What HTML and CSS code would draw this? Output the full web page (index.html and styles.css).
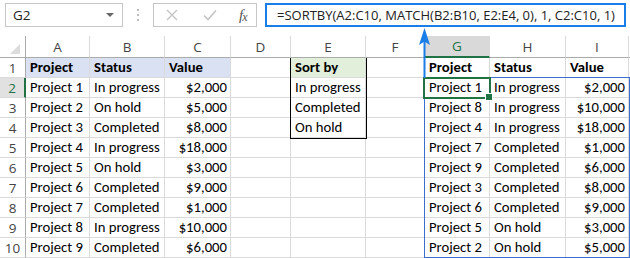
FILE: index.html
```html
<!DOCTYPE html>
<html>
<head>
<meta charset="utf-8">
<link rel="stylesheet" href="styles.css">
</head>
<body>
<div class="app">
  <div class="fbar">
    <div class="namebox"><span>G2</span><span class="caret"></span></div>
    <div class="dots"><i></i><i></i><i></i></div>
    <div class="btns">
      <svg class="ico" width="12" height="12" viewBox="0 0 12 12"><path d="M1 1L11 11M11 1L1 11" stroke="#c4c4c4" stroke-width="1.4" fill="none"/></svg>
      <svg class="ico" width="14" height="12" viewBox="0 0 14 12"><path d="M1 6.5L5 10.5L13 1.5" stroke="#c4c4c4" stroke-width="1.6" fill="none"/></svg>
      <span class="fx">f<span class="fxx">x</span></span>
    </div>
    <div class="formula">=SORTBY(A2:C10, MATCH(B2:B10, E2:E4, 0), 1, C2:C10, 1)</div>
  </div>
  <div class="sheet">
    <div class="corner"><span class="tri"></span></div>
    <div class="ch">A</div><div class="ch">B</div><div class="ch">C</div><div class="ch">D</div><div class="ch">E</div><div class="ch">F</div><div class="ch sel">G</div><div class="ch">H</div><div class="ch">I</div><div class="ch"></div>

    <div class="rh">1</div>
    <div class="c b hdr">Project</div><div class="c b hdr">Status</div><div class="c b hdr">Value</div><div class="c"></div><div class="c b grn">Sort by</div><div class="c"></div><div class="c b">Project</div><div class="c b">Status</div><div class="c b">Value</div><div class="c"></div>

    <div class="rh rsel">2</div>
    <div class="c">Project 1</div><div class="c">In progress</div><div class="c r">$2,000</div><div class="c"></div><div class="c">In progress</div><div class="c"></div><div class="c">Project 1</div><div class="c">In progress</div><div class="c r">$2,000</div><div class="c"></div>

    <div class="rh">3</div>
    <div class="c">Project 2</div><div class="c">On hold</div><div class="c r">$5,000</div><div class="c"></div><div class="c">Completed</div><div class="c"></div><div class="c">Project 8</div><div class="c">In progress</div><div class="c r">$10,000</div><div class="c"></div>

    <div class="rh">4</div>
    <div class="c">Project 3</div><div class="c">Completed</div><div class="c r">$8,000</div><div class="c"></div><div class="c">On hold</div><div class="c"></div><div class="c">Project 4</div><div class="c">In progress</div><div class="c r">$18,000</div><div class="c"></div>

    <div class="rh">5</div>
    <div class="c">Project 4</div><div class="c">In progress</div><div class="c r">$18,000</div><div class="c"></div><div class="c"></div><div class="c"></div><div class="c">Project 7</div><div class="c">Completed</div><div class="c r">$1,000</div><div class="c"></div>

    <div class="rh">6</div>
    <div class="c">Project 5</div><div class="c">On hold</div><div class="c r">$3,000</div><div class="c"></div><div class="c"></div><div class="c"></div><div class="c">Project 9</div><div class="c">Completed</div><div class="c r">$6,000</div><div class="c"></div>

    <div class="rh">7</div>
    <div class="c">Project 6</div><div class="c">Completed</div><div class="c r">$9,000</div><div class="c"></div><div class="c"></div><div class="c"></div><div class="c">Project 3</div><div class="c">Completed</div><div class="c r">$8,000</div><div class="c"></div>

    <div class="rh">8</div>
    <div class="c">Project 7</div><div class="c">Completed</div><div class="c r">$1,000</div><div class="c"></div><div class="c"></div><div class="c"></div><div class="c">Project 6</div><div class="c">Completed</div><div class="c r">$9,000</div><div class="c"></div>

    <div class="rh">9</div>
    <div class="c">Project 8</div><div class="c">In progress</div><div class="c r">$10,000</div><div class="c"></div><div class="c"></div><div class="c"></div><div class="c">Project 5</div><div class="c">On hold</div><div class="c r">$3,000</div><div class="c"></div>

    <div class="rh">10</div>
    <div class="c">Project 9</div><div class="c">Completed</div><div class="c r">$6,000</div><div class="c"></div><div class="c"></div><div class="c"></div><div class="c">Project 2</div><div class="c">On hold</div><div class="c r">$5,000</div><div class="c"></div>

    <div class="ov ebox"></div>
    <div class="ov spill"></div>
    <div class="ov cursor"><span class="handle"></span></div>
  </div>
  <div class="arrow">
    <svg width="13" height="50" viewBox="0 0 13 50"><path d="M6.5 0L12 17L6.5 13.5L1 17Z" fill="#1a7ee8"/><rect x="5.5" y="12" width="2" height="38" fill="#1a7ee8"/></svg>
  </div>
</div>
</body>
</html>
```

FILE: styles.css
```css
html, body { margin: 0; padding: 0; background: #fff; }
body { width: 630px; height: 258px; overflow: hidden; }
.app { position: relative; width: 630px; height: 258px; overflow: hidden; font-family: "Carlito", "Lato", "Liberation Sans", sans-serif; }

.fbar { height: 36px; display: flex; align-items: flex-start; padding-top: 3px; box-sizing: border-box; padding-left: 5px; }
.namebox { width: 118px; height: 24px; box-sizing: border-box; border: 1px solid #c6c6c6; display: flex; align-items: center; justify-content: space-between; padding: 0 8px 0 7px; font-family: "Open Sans", sans-serif; font-size: 13.5px; color: #222; }
.caret { width: 0; height: 0; border-left: 4px solid transparent; border-right: 4px solid transparent; border-top: 4px solid #666; }
.dots { width: 30px; height: 24px; display: flex; flex-direction: column; align-items: center; justify-content: center; gap: 3px; }
.dots i { width: 2px; height: 2px; background: #bdbdbd; display: block; }
.btns { width: 104px; height: 24px; box-sizing: border-box; border: 1px solid #c6c6c6; display: flex; align-items: center; padding-left: 12px; }
.btns .ico:first-child { margin-right: 25px; }
.btns .ico:nth-child(2) { margin-right: 22px; }
.fx { font-family: "Liberation Serif", serif; font-style: italic; font-size: 15px; color: #555; letter-spacing: -1px; }
.fxx { font-size: 12px; position: relative; top: 1px; }
.formula { margin-left: 8px; width: 361px; height: 24px; box-sizing: border-box; border: 2px solid #1a7ee8; display: flex; align-items: center; padding-left: 10px; font-family: "Open Sans", sans-serif; font-size: 13px; color: #222; white-space: nowrap; }

.sheet { position: relative; display: grid; grid-template-columns: 26px 64px 75px 66px 60px 75px 59px 65px 76px 63px 40px; grid-template-rows: 22px repeat(10, 20px); }
.corner, .ch, .rh, .c { box-sizing: border-box; border-right: 1px solid #dadada; border-bottom: 1px solid #dadada; }
.corner { border-bottom-color: #ababab; border-right-color: #ababab; position: relative; }
.tri { position: absolute; right: 5px; bottom: 3px; width: 0; height: 0; border-left: 10px solid transparent; border-bottom: 10px solid #dcdcdc; }
.ch { border-bottom-color: #ababab; display: flex; align-items: center; justify-content: center; font-family: "Open Sans", sans-serif; font-size: 13.5px; color: #444; }
.ch.sel { background: #d9d9d9; color: #217346; border-bottom: 2px solid #217346; }
.rh { border-right-color: #ababab; display: flex; align-items: center; justify-content: center; font-family: "Open Sans", sans-serif; font-size: 13.5px; color: #444; }
.rh.rsel { background: #e1e1e1; color: #217346; border-right: 2px solid #217346; }
.c { font-size: 14.7px; color: #000; padding: 0 3px 0 4px; white-space: nowrap; display: flex; align-items: center; line-height: 1; }
.c.b { font-weight: bold; }
.c.r { justify-content: flex-end; }
.c.hdr { background: #d9e1f2; }
.c.grn { background: #e2efda; }

.ov { position: absolute; box-sizing: border-box; pointer-events: none; }
.ebox { grid-column: 6 / 7; grid-row: 2 / 6; border: 1px solid #000; border-top: none; top: 0; left: -1px; right: -1px; bottom: -1px; }
.spill { grid-column: 8 / 11; grid-row: 3 / 12; border: 1px solid #3a6fd0; top: -1px; left: -1px; right: -1px; bottom: 0; }
.cursor { grid-column: 8 / 9; grid-row: 3 / 4; border: 2px solid #217346; top: -1px; left: -2px; right: -1px; bottom: -1px; }
.handle { position: absolute; right: -4px; bottom: -4px; width: 6px; height: 6px; background: #217346; border: 1px solid #fff; }

.arrow { position: absolute; left: 418px; top: 28px; width: 13px; height: 50px; }
.arrow svg { display: block; }
```
